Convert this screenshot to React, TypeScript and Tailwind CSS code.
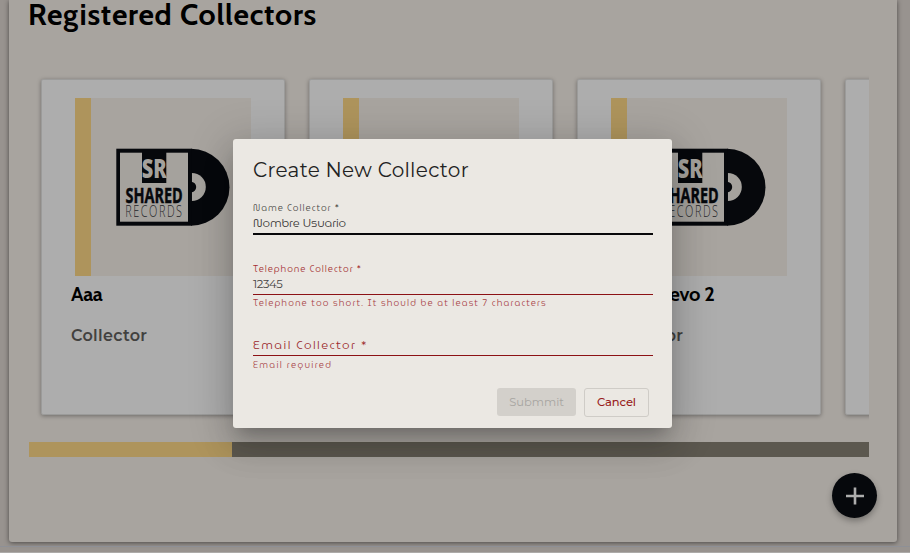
import React from "react";

const montserrat = "font-['Montserrat','Inter',sans-serif]";
const alternates = "font-['MuseoModerno','Montserrat_Alternates','Lato',sans-serif] font-light";

function Logo() {
  return (
    <svg width="116" height="80" viewBox="115 147 116 80" className="block shrink-0">
      <path d="M191 148.7a38.5 38.5 0 0 1 0 77z" fill="#06080c" />
      <path d="M191.8 173a14 14 0 0 1 0 28z" fill="#a5a29d" />
      <path d="M191 181.8a5.2 5.2 0 0 1 0 10.4z" fill="#06080c" />
      <rect x="116.3" y="148.7" width="75.5" height="77" fill="#06080c" />
      <rect x="120" y="152.7" width="68" height="69" fill="#a5a29d" />
      <rect x="142" y="150" width="24.3" height="33" fill="#06080c" />
      <text x="141.8" y="177.8" textLength="25" lengthAdjust="spacingAndGlyphs" fill="#a5a29d" className="font-['Open_Sans',sans-serif] text-[26px] font-extrabold">SR</text>
      <text x="125.6" y="202.6" textLength="57" lengthAdjust="spacingAndGlyphs" fill="#06080c" stroke="#06080c" strokeWidth=".5" className="font-['Open_Sans',sans-serif] text-[22px] font-bold">SHARED</text>
      <text x="179" y="216.6" textLength="81" lengthAdjust="spacing" fill="#25262a" className="font-['Open_Sans',sans-serif] text-[15.5px] font-light" transform="scale(.7 1)">RECORDS</text>
    </svg>
  );
}

function CollectorCard({ name }: { name?: string }) {
  return (
    <article className="h-[336px] w-[244px] shrink-0 rounded-[2px] border border-[#9b9b9a] bg-[#adadad] pt-[18px] shadow-[0_1px_4px_rgba(0,0,0,0.35)]">
      <div className="ml-[33px] flex h-[178px] w-[176px] items-center border-l-[16px] border-[#ae945c] bg-[#a8a49f] pl-6">
        {name && <Logo />}
      </div>
      {name && (
        <>
          <h2 className="ml-[29px] mt-[6px] whitespace-nowrap font-['Cabin','Lato',sans-serif] text-[20px] font-bold leading-6 tracking-[-0.3px] text-black">{name}</h2>
          <p className={`${montserrat} ml-[29px] mt-[18px] text-[16px] font-semibold leading-6 tracking-[0.3px] text-[#42413f]`}>Collector</p>
        </>
      )}
    </article>
  );
}

export default function App() {
  return (
    <div className="relative h-[553px] w-[910px] overflow-hidden bg-[#98938f]">
      <main className="ml-[9px] h-[542px] w-[888px] overflow-hidden rounded-b-[3px] bg-[#a8a49f] pl-5 shadow-[0_1px_5px_rgba(0,0,0,0.5)]">
        <h1 className="-ml-px -mt-[5px] h-10 whitespace-nowrap font-['Cabin','Lato',sans-serif] text-[30px] font-bold leading-10 tracking-[0.72px] text-black">Registered Collectors</h1>
        <div className="mt-[34px] flex h-[373px] w-[840px] gap-6 overflow-hidden pl-3 pt-[10px]">
          <CollectorCard name="Aaa" />
          <CollectorCard />
          <CollectorCard name="Test Nuevo 2" />
          <CollectorCard />
        </div>
        <div className="flex h-[15px] w-[840px] bg-[#5c584f]">
          <div className="w-[203px] bg-[#ae945c]" />
        </div>
      </main>
      <div className="mt-[4px] h-px bg-[#8e9096]" />
      <div className="mt-[5px] h-px bg-[#adaba9]" />

      <button className="absolute left-[832px] top-[473px] flex size-[45px] items-center justify-center rounded-full bg-[#06080c] shadow-[0_3px_6px_rgba(0,0,0,0.3)]">
        <svg width="18" height="18" viewBox="0 0 18 18" stroke="#adadad" strokeWidth="2.6"><path d="M9 .5v17M0 9h18" /></svg>
      </button>

      <section className="absolute left-[233px] top-[139px] h-[289px] w-[439px] rounded-[3px] bg-[#ebe8e3] px-5 shadow-[0_11px_15px_-7px_rgba(0,0,0,0.2),0_20px_32px_3px_rgba(0,0,0,0.1),0_6px_40px_8px_rgba(0,0,0,0.14)]">
        <h2 className={`${montserrat} h-[61px] whitespace-nowrap pt-[19px] text-[20px] font-normal leading-6 tracking-[0.28px] text-[#222]`}>Create New Collector</h2>
        <div className={`${alternates} h-[35px] w-[400px] whitespace-nowrap border-b-2 border-[#08080a] pt-px`}>
          <div className="h-[14px] text-[9px] leading-[14px] tracking-[1px] text-[#4a4846]">Name Collector *</div>
          <div className="text-[12px] leading-4 tracking-[-0.1px] text-[#3b3938]">Nombre Usuario</div>
        </div>
        <div className={`${alternates} mt-[26px] h-[34px] w-[400px] whitespace-nowrap border-b border-[#8c1115] pt-px`}>
          <div className="h-[14px] text-[9px] leading-[14px] tracking-[0.95px] text-[#a32d30]">Telephone Collector *</div>
          <div className={`${montserrat} text-[11.5px] font-normal leading-4 tracking-[-0.4px] text-[#454342]`}>12345</div>
        </div>
        <p className={`${alternates} mt-[1px] h-[14px] whitespace-nowrap text-[9px] leading-[14px] tracking-[1.11px] text-[#a84245]`}>Telephone too short. It should be at least 7 characters</p>
        <div className={`${alternates} mt-[27px] h-[19px] w-[400px] whitespace-nowrap border-b border-[#8c1115] text-[12px] leading-4 tracking-[1.45px] text-[#9b2a2d]`}>Email Collector *</div>
        <p className={`${alternates} mt-[2px] h-[14px] whitespace-nowrap text-[9px] leading-[14px] tracking-[1.3px] text-[#a84245]`}>Email required</p>
        <div className={`${montserrat} mr-[3px] mt-[16px] flex justify-end gap-2 text-[11.5px] leading-none`}>
          <button className="h-7 w-[79px] rounded-[3px] bg-[#d3d0cb] pt-px text-[#a7a5a1]">Submmit</button>
          <button className="h-[29px] w-[65px] rounded-[3px] border border-[#cfccc7] font-medium tracking-[-0.1px] text-[#981b20]">Cancel</button>
        </div>
      </section>
    </div>
  );
}
